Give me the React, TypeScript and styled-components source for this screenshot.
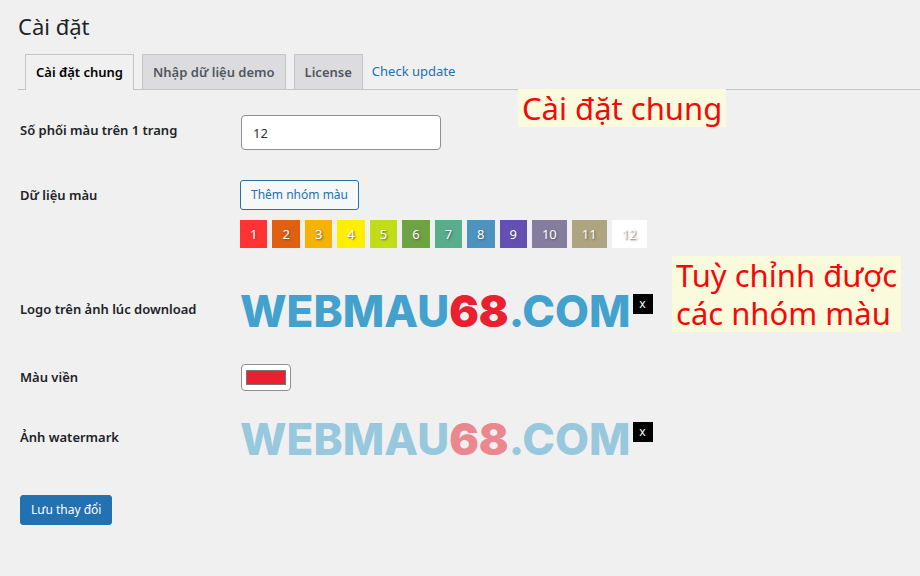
import React from "react";
import styled, { createGlobalStyle } from "styled-components";

const GlobalStyle = createGlobalStyle`
  *, *::before, *::after { box-sizing: border-box; }
  html { background: #f0f0f0; }
  body {
    margin: 0;
    color: #1d2327;
    font: 400 13px/20px "Noto Sans", "Open Sans", sans-serif;
  }
  button, input { font: inherit; }
`;

const Page = styled.main`
  position: relative;
  padding: 11px 0 20px 18px;
`;

const Title = styled.h1`
  margin: 0;
  font-size: 22px;
  font-weight: 400;
  line-height: 30px;
`;

const TabBar = styled.nav`
  display: flex;
  gap: 8px;
  margin-top: 13px;
  padding-left: 7px;
  border-bottom: 1px solid #c3c4c7;
`;

const Tab = styled.a<{ $active?: boolean }>`
  height: ${(p) => (p.$active ? "36px" : "35px")};
  margin-bottom: ${(p) => (p.$active ? "-1px" : "0")};
  padding: 0 10px;
  border: 1px solid #c3c4c7;
  border-bottom: 0;
  background: ${(p) => (p.$active ? "#f0f0f0" : "#dcdcde")};
  color: ${(p) => (p.$active ? "#000" : "#50575e")};
  font-weight: 600;
  line-height: 35px;
  text-decoration: none;
  white-space: nowrap;
`;

const UpdateLink = styled.a`
  margin-left: 1px;
  color: #2271b1;
  line-height: 34px;
  text-decoration: none;
  white-space: nowrap;
`;

const Form = styled.form`
  display: grid;
  gap: 30px;
  padding: 25px 0 0 2px;
`;

const Row = styled.div<{ $before?: number; $after?: number }>`
  display: grid;
  grid-template-columns: 220px 1fr;
  align-items: start;
  padding-top: ${(p) => p.$before ?? 0}px;
  padding-bottom: ${(p) => p.$after ?? 0}px;
`;

const Label = styled.label<{ $top?: number }>`
  padding-top: ${(p) => p.$top ?? 5}px;
  font-weight: 600;
`;

const CountInput = styled.input`
  width: 200px;
  height: 35px;
  margin-left: 1px;
  padding: 0 11px;
  border: 1px solid #8c8f94;
  border-radius: 4px;
  background: #fff;
  color: #2c3338;
`;

const Button = styled.button<{ $primary?: boolean }>`
  justify-self: start;
  height: 30px;
  padding: 0 10px;
  border: 1px solid #2271b1;
  border-radius: 3px;
  background: ${(p) => (p.$primary ? "#2271b1" : "#f6f7f7")};
  color: ${(p) => (p.$primary ? "#fff" : "#2271b1")};
  font-size: 12px;
  line-height: 28px;
  white-space: nowrap;
`;

const ColorData = styled.div`
  display: grid;
  gap: 10px;
`;

const Swatches = styled.div`
  display: flex;
  flex-wrap: wrap;
  gap: 5px;
`;

const Swatch = styled.button<{ $color: string }>`
  height: 28px;
  padding: 0 10px;
  border: 0;
  background: ${(p) => p.$color};
  color: #fff;
  line-height: 28px;
  text-shadow: 1px 1px 2px #555;
`;

const ImageField = styled.div`
  display: flex;
  align-items: flex-start;
  gap: 2px;
`;

const Wordmark = styled.span<{ $faded?: boolean }>`
  color: #43a1cd;
  font: 800 44px/34px Inter, sans-serif;
  white-space: nowrap;
  opacity: ${(p) => (p.$faded ? 0.5 : 1)};
`;

const Accent = styled.span`
  color: #e8202f;
  font-weight: 900;
`;

const Remove = styled.button`
  width: 20px;
  height: 20px;
  padding: 0;
  border: 0;
  background: #000;
  color: #fff;
  font-size: 12px;
  line-height: 20px;
`;

const ColorInput = styled.input`
  width: 50px;
  height: 27px;
  margin-left: 1px;
  padding: 1px 2px;
  border: 1px solid #8c8f94;
  border-radius: 4px;
  background: #fff;
`;

const Note = styled.p<{ $x: number; $y: number }>`
  position: absolute;
  left: ${(p) => p.$x}px;
  top: ${(p) => p.$y}px;
  margin: 0;
  padding: 0 4px;
  background: #fafadc;
  color: #f20a0a;
  font: 400 31px/38px "Noto Sans", "Open Sans", sans-serif;
  white-space: nowrap;
`;

const colors = [
  "#ff3333", "#e06010", "#f3b300", "#ffee00", "#c0dd18", "#6ea342",
  "#57ad8c", "#4c93bf", "#6450b2", "#857da0", "#aea580", "#ffffff",
];

function LogoField({ faded, name }: { faded?: boolean; name: string }) {
  return (
    <ImageField>
      <Wordmark $faded={faded}>
        WEBMAU<Accent>68</Accent>.COM
      </Wordmark>
      <Remove type="button" aria-label={`Xóa ${name}`}>x</Remove>
    </ImageField>
  );
}

export default function App() {
  return (
    <>
      <GlobalStyle />
      <Page>
        <Title>Cài đặt</Title>
        <TabBar>
          <Tab href="#general" $active aria-current="page">Cài đặt chung</Tab>
          <Tab href="#demo">Nhập dữ liệu demo</Tab>
          <Tab href="#license">License</Tab>
          <UpdateLink href="#update">Check update</UpdateLink>
        </TabBar>
        <Form onSubmit={(e) => e.preventDefault()}>
          <Row>
            <Label htmlFor="count">Số phối màu trên 1 trang</Label>
            <CountInput id="count" type="text" defaultValue="12" />
          </Row>
          <Row>
            <Label htmlFor="add-group">Dữ liệu màu</Label>
            <ColorData>
              <Button id="add-group" type="button">Thêm nhóm màu</Button>
              <Swatches>
                {colors.map((color, i) => (
                  <Swatch key={color} type="button" $color={color}>{i + 1}</Swatch>
                ))}
              </Swatches>
            </ColorData>
          </Row>
          <Row $before={16} $after={6}>
            <Label as="span">Logo trên ảnh lúc download</Label>
            <LogoField name="logo" />
          </Row>
          <Row>
            <Label htmlFor="border-color" $top={3}>Màu viền</Label>
            <ColorInput id="border-color" type="color" defaultValue="#e8202f" />
          </Row>
          <Row $before={1} $after={9}>
            <Label as="span">Ảnh watermark</Label>
            <LogoField faded name="watermark" />
          </Row>
          <Button type="submit" $primary>Lưu thay đổi</Button>
        </Form>
        <Note $x={518} $y={89}>Cài đặt chung</Note>
        <Note $x={672} $y={256}>
          Tuỳ chỉnh được
          <br />
          các nhóm màu
        </Note>
      </Page>
    </>
  );
}
